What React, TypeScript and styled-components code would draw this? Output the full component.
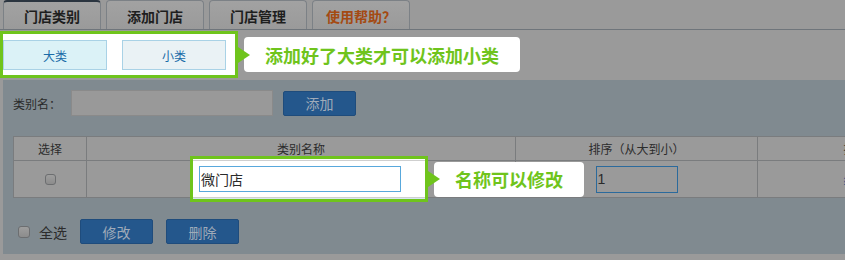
import { styled, createGlobalStyle } from 'styled-components';

const GREEN = '#6fc41c';

const GlobalStyle = createGlobalStyle`
  html, body {
    margin: 0;
    padding: 0;
    background: #9a9a9a;
    overflow: hidden;
  }
  body {
    font-family: "Liberation Sans", "Noto Sans CJK SC", sans-serif;
  }
`;

const _Page = styled.div`
  width: 845px;
  height: 260px;
  overflow: hidden;
  background: #9a9a9a;
`;

const _TabBar = styled.div`
  display: flex;
  gap: 5px;
  height: 29px;
  padding-left: 3px;
  border-bottom: 1px solid #6f757b;
`;

const _Tab = styled.div<{ $active?: boolean; $color?: string }>`
  box-sizing: border-box;
  width: 98px;
  height: 29px;
  display: flex;
  align-items: center;
  justify-content: center;
  padding-top: 1px;
  border: 1px solid #7c8186;
  border-bottom: none;
  border-top: ${(p) => (p.$active ? '2px solid #2b3540' : '1px solid #7c8186')};
  border-radius: 4px 4px 0 0;
  background: linear-gradient(#a2a2a2, #9a9a9a);
  color: ${(p) => p.$color ?? '#1e1e1e'};
  font-family: "Noto Sans CJK SC", sans-serif;
  font-size: 14px;
  font-weight: bold;
`;

const _SubRow = styled.div`
  display: flex;
  align-items: center;
  height: 47px;
  margin: 1px 0 2px;
`;

const _SubGroup = styled.div`
  display: flex;
  gap: 15px;
  width: 238px;
  height: 47px;
  box-sizing: border-box;
  padding: 6px 9px 5px 0;
  border: 3px solid ${GREEN};
  background: #fff;
`;

const _SubButton = styled.div<{ $bg: string }>`
  box-sizing: border-box;
  width: 104px;
  height: 30px;
  display: flex;
  align-items: center;
  justify-content: center;
  border: 1px solid #a9d2e6;
  background: ${(p) => p.$bg};
  color: #1a6ca8;
  font-size: 12px;
`;

const _Arrow = styled.div`
  position: relative;
  z-index: 1;
  width: 0;
  height: 0;
  border-left: 12px solid ${GREEN};
  border-top: 8px solid transparent;
  border-bottom: 8px solid transparent;
`;

const _Callout = styled.div`
  height: 35px;
  margin-left: -6px;
  padding: 0 21px;
  display: flex;
  align-items: center;
  background: #fff;
  border-radius: 4px;
  color: ${GREEN};
  font-size: 18px;
  font-weight: bold;
  white-space: nowrap;
`;

const _Panel = styled.div`
  box-sizing: border-box;
  height: 174px;
  margin-left: 3px;
  padding: 10px 0 0 10px;
  background: #808a90;
`;

const _FormRow = styled.div`
  display: flex;
  align-items: center;
  height: 26px;
`;

const _Label = styled.span`
  width: 58px;
  font-size: 12px;
  color: #2a2a2a;
`;

const _Field = styled.div<{ $width: number; $height: number; $border: string; $bg: string }>`
  box-sizing: border-box;
  width: ${(p) => p.$width}px;
  height: ${(p) => p.$height}px;
  display: flex;
  align-items: center;
  padding-left: 1px;
  border: 1px solid ${(p) => p.$border};
  background: ${(p) => p.$bg};
  color: #2a2a2a;
  font-size: 14px;
`;

const _SortField = styled(_Field)`
  margin: 0 auto;
`;

const _Button = styled.div<{ $gap: number }>`
  box-sizing: border-box;
  width: 73px;
  height: 25px;
  margin-left: ${(p) => p.$gap}px;
  display: flex;
  align-items: center;
  justify-content: center;
  border: 1px solid #1f4c7c;
  border-radius: 2px;
  background: #24578c;
  color: #a0abb9;
  font-size: 14px;
`;

const _TableWrap = styled.div`
  position: relative;
  margin-top: 20px;
  width: 940px;
`;

const _Table = styled.table`
  width: 940px;
  border-collapse: collapse;
  table-layout: fixed;
  background: #9a9a9a;
  th,
  td {
    border: 1px solid #7a7c7e;
    padding: 0;
    text-align: center;
    font-size: 12px;
    font-weight: normal;
    color: #2c2c2c;
  }
  th {
    height: 23px;
  }
  td {
    height: 36px;
  }
`;

const _Col = styled.col<{ $width: number }>`
  width: ${(p) => p.$width}px;
`;

const _Check = styled.span<{ $size: number; $gap?: number }>`
  display: inline-block;
  box-sizing: border-box;
  width: ${(p) => p.$size}px;
  height: ${(p) => p.$size}px;
  margin-left: ${(p) => p.$gap ?? 0}px;
  border: 1px solid #6c6e70;
  border-radius: 3px;
  background: linear-gradient(#9e9e9e, #8c8c8c);
  vertical-align: middle;
`;

const _EditLink = styled.span`
  color: #1f4f86;
`;

const _Spotlight = styled.div`
  position: absolute;
  left: 177px;
  top: 20px;
  display: flex;
  align-items: center;
`;

const _SpotBox = styled.div`
  box-sizing: border-box;
  width: 238px;
  height: 46px;
  padding: 7px 0 0 6px;
  border: 3px solid ${GREEN};
  background: linear-gradient(
    #fff 0 1px,
    #cfcfcf 1px 2px,
    #fff 2px 38px,
    #cfcfcf 38px 39px,
    #d6e8f1 39px 40px
  );
`;

const _BottomBar = styled.div`
  display: flex;
  align-items: center;
  height: 25px;
  margin-top: 21px;
`;

const _CheckAllLabel = styled.span`
  margin-left: 9px;
  font-size: 14px;
  color: #2c2c2c;
`;

const tabs = [
  { label: '门店类别', active: true },
  { label: '添加门店' },
  { label: '门店管理' },
  { label: '使用帮助？', color: '#a44a12' },
];

const columns = [73, 429, 242, 196];

export default function App() {
  return (
    <_Page>
      <GlobalStyle />
      <_TabBar>
        {tabs.map((t) => (
          <_Tab key={t.label} $active={t.active} $color={t.color}>
            {t.label}
          </_Tab>
        ))}
      </_TabBar>

      <_SubRow>
        <_SubGroup>
          <_SubButton $bg="#dbf2f7">大类</_SubButton>
          <_SubButton $bg="#eaf2f5">小类</_SubButton>
        </_SubGroup>
        <_Arrow />
        <_Callout>添加好了大类才可以添加小类</_Callout>
      </_SubRow>

      <_Panel>
        <_FormRow>
          <_Label>类别名：</_Label>
          <_Field $width={202} $height={26} $border="#8a8a8a" $bg="#999999" />
          <_Button $gap={10}>添加</_Button>
        </_FormRow>

        <_TableWrap>
          <_Table>
            <colgroup>
              {columns.map((w, i) => (
                <_Col key={i} $width={w} />
              ))}
            </colgroup>
            <thead>
              <tr>
                <th>选择</th>
                <th>类别名称</th>
                <th>排序（从大到小）</th>
                <th>操作</th>
              </tr>
            </thead>
            <tbody>
              <tr>
                <td>
                  <_Check $size={11} />
                </td>
                <td />
                <td>
                  <_SortField $width={82} $height={27} $border="#2b6a9c" $bg="#9a9a9a">
                    1
                  </_SortField>
                </td>
                <td>
                  <_EditLink>编辑</_EditLink>
                </td>
              </tr>
            </tbody>
          </_Table>

          <_Spotlight>
            <_SpotBox>
              <_Field $width={202} $height={26} $border="#58a8dc" $bg="#fff">
                微门店
              </_Field>
            </_SpotBox>
            <_Arrow />
            <_Callout>名称可以修改</_Callout>
          </_Spotlight>
        </_TableWrap>

        <_BottomBar>
          <_Check $size={12} $gap={5} />
          <_CheckAllLabel>全选</_CheckAllLabel>
          <_Button $gap={13}>修改</_Button>
          <_Button $gap={13}>删除</_Button>
        </_BottomBar>
      </_Panel>
    </_Page>
  );
}
